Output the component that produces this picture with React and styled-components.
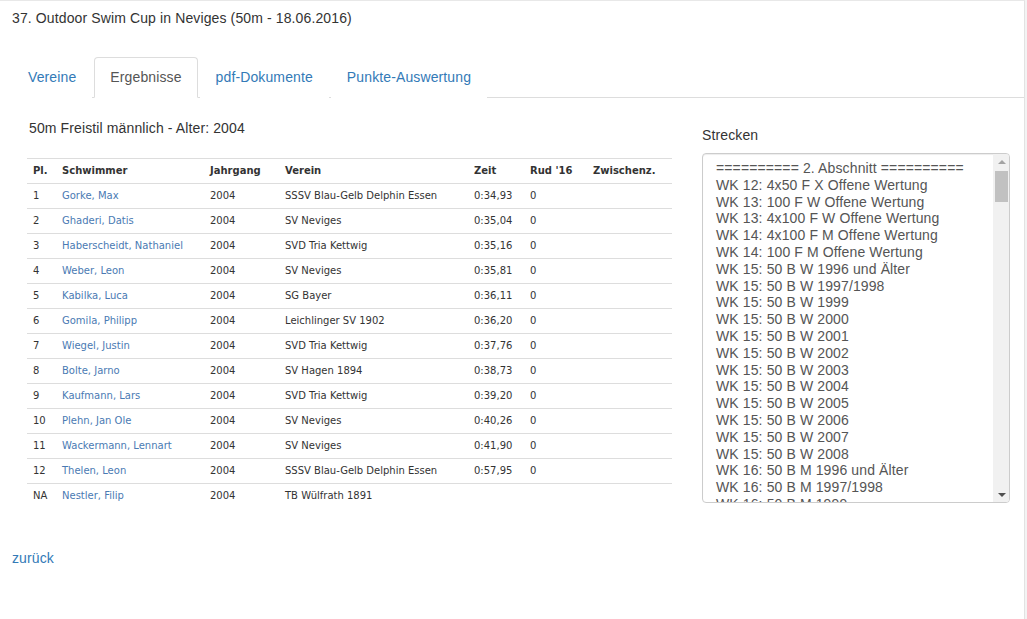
import React from 'react'
import styled, { createGlobalStyle } from 'styled-components'

const GlobalStyle = createGlobalStyle`
  html, body {
    margin: 0;
    padding: 0;
    background: #f3f3f3;
  }
  body {
    font-family: "Liberation Sans", Arial, sans-serif;
    font-size: 14px;
    letter-spacing: 0.12px;
    color: #333;
  }
`

const results = [
  ['1', 'Gorke, Max', '2004', 'SSSV Blau-Gelb Delphin Essen', '0:34,93', '0'],
  ['2', 'Ghaderi, Datis', '2004', 'SV Neviges', '0:35,04', '0'],
  ['3', 'Haberscheidt, Nathaniel', '2004', 'SVD Tria Kettwig', '0:35,16', '0'],
  ['4', 'Weber, Leon', '2004', 'SV Neviges', '0:35,81', '0'],
  ['5', 'Kabilka, Luca', '2004', 'SG Bayer', '0:36,11', '0'],
  ['6', 'Gomila, Philipp', '2004', 'Leichlinger SV 1902', '0:36,20', '0'],
  ['7', 'Wiegel, Justin', '2004', 'SVD Tria Kettwig', '0:37,76', '0'],
  ['8', 'Bolte, Jarno', '2004', 'SV Hagen 1894', '0:38,73', '0'],
  ['9', 'Kaufmann, Lars', '2004', 'SVD Tria Kettwig', '0:39,20', '0'],
  ['10', 'Plehn, Jan Ole', '2004', 'SV Neviges', '0:40,26', '0'],
  ['11', 'Wackermann, Lennart', '2004', 'SV Neviges', '0:41,90', '0'],
  ['12', 'Thelen, Leon', '2004', 'SSSV Blau-Gelb Delphin Essen', '0:57,95', '0'],
  ['NA', 'Nestler, Filip', '2004', 'TB Wülfrath 1891', '', ''],
]

const years = ['1996 und Älter', '1997/1998', '1999', '2000', '2001', '2002', '2003', '2004', '2005', '2006', '2007', '2008']

// only the first lines are visible, the rest sits below the fold of the list
const strecken = [
  '========== 2. Abschnitt ==========',
  'WK 12: 4x50 F X Offene Wertung',
  'WK 13: 100 F W Offene Wertung',
  'WK 13: 4x100 F W Offene Wertung',
  'WK 14: 4x100 F M Offene Wertung',
  'WK 14: 100 F M Offene Wertung',
  ...years.map((y) => `WK 15: 50 B W ${y}`),
  ...years.slice(0, 3).map((y) => `WK 16: 50 B M ${y}`),
]

const tabs = ['Vereine', 'Ergebnisse', 'pdf-Dokumente', 'Punkte-Auswertung']

function App() {
  return (
    <>
      <GlobalStyle />
      <Page>
        <Title>37. Outdoor Swim Cup in Neviges (50m - 18.06.2016)</Title>
        <TabBar>
          {tabs.map((t) => (
            <Tab key={t} $active={t === 'Ergebnisse'}>{t}</Tab>
          ))}
        </TabBar>
        <Row>
          <LeftCol>
            <Heading>50m Freistil männlich - Alter: 2004</Heading>
            <Table>
              <colgroup>
                <col style={{ width: 29 }} />
                <col style={{ width: 148 }} />
                <col style={{ width: 75 }} />
                <col style={{ width: 189 }} />
                <col style={{ width: 56 }} />
                <col style={{ width: 63 }} />
                <col />
              </colgroup>
              <thead>
                <tr>
                  <Th>Pl.</Th>
                  <Th>Schwimmer</Th>
                  <Th>Jahrgang</Th>
                  <Th>Verein</Th>
                  <Th>Zeit</Th>
                  <Th>Rud '16</Th>
                  <Th>Zwischenz.</Th>
                </tr>
              </thead>
              <tbody>
                {results.map(([pl, name, jg, verein, zeit, rud]) => (
                  <tr key={name}>
                    <Td>{pl}</Td>
                    <Td><NameLink href="#">{name}</NameLink></Td>
                    <Td>{jg}</Td>
                    <Td>{verein}</Td>
                    <Td>{zeit}</Td>
                    <Td>{rud}</Td>
                    <Td></Td>
                  </tr>
                ))}
              </tbody>
            </Table>
          </LeftCol>
          <RightCol>
            <Label>Strecken</Label>
            <ListBox>
              <OptionList>
                {strecken.map((s, i) => (
                  <Option key={i}>{s}</Option>
                ))}
              </OptionList>
              <ScrollBar>
                <ScrollButton><Arrow $dir="up" /></ScrollButton>
                <ScrollTrack><Thumb /></ScrollTrack>
                <ScrollButton><Arrow $dir="down" /></ScrollButton>
              </ScrollBar>
            </ListBox>
          </RightCol>
        </Row>
        <BackLink href="#">zurück</BackLink>
      </Page>
    </>
  )
}

const Page = styled.div`
  width: calc(100% - 2px);
  min-height: 100vh;
  box-sizing: border-box;
  background: #fff;
  border-top: 1px solid #e8e8e8;
  border-right: 1px solid #e2e2e2;
  padding: 7px 0 0 12px;
`

const Title = styled.div`
  font-size: 14px;
  line-height: 20px;
  color: #333;
`

const TabBar = styled.div`
  display: flex;
  margin-top: 29px;
  border-bottom: 1px solid #ddd;
`

const Tab = styled.a`
  display: block;
  padding: 10px 15px;
  line-height: 19px;
  margin-right: 2px;
  margin-bottom: -1px;
  border: 1px solid ${(p) => (p.$active ? '#ddd' : 'transparent')};
  border-bottom-color: ${(p) => (p.$active ? '#fff' : 'transparent')};
  border-radius: 4px 4px 0 0;
  background: #fff;
  color: ${(p) => (p.$active ? '#555' : '#337ab7')};
  cursor: pointer;
`

const Row = styled.div`
  display: grid;
  grid-template-columns: 675px 1fr;
`

const LeftCol = styled.div`
  padding: 20px 15px 0;
`

const RightCol = styled.div`
  padding: 27px 14px 0 15px;
`

const Heading = styled.div`
  font-size: 14px;
  line-height: 20px;
  margin-left: 2px;
  margin-bottom: 20px;
`

const Table = styled.table`
  width: 100%;
  table-layout: fixed;
  border-collapse: collapse;
  font-family: "DejaVu Sans", Verdana, sans-serif;
  font-size: 10px;
  letter-spacing: 0;
  color: #333;
`

const Th = styled.th`
  text-align: left;
  font-weight: bold;
  padding: 5px 6px;
  line-height: 14px;
  border-top: 1px solid #ddd;
  white-space: nowrap;
  overflow: hidden;
`

const Td = styled.td`
  padding: 5px 6px;
  line-height: 14px;
  border-top: 1px solid #ddd;
  white-space: nowrap;
  overflow: hidden;
`

const NameLink = styled.a`
  color: #4a7ab3;
  text-decoration: none;
`

const Label = styled.div`
  font-size: 14px;
  line-height: 20px;
  margin-bottom: 8px;
`

const ListBox = styled.div`
  display: flex;
  height: 350px;
  box-sizing: border-box;
  border: 1px solid #ccc;
  border-radius: 4px;
  box-shadow: inset 0 1px 1px rgba(0, 0, 0, 0.075);
  overflow: hidden;
`

const OptionList = styled.div`
  flex: 1;
  min-width: 0;
  padding: 6px 0 0 13px;
  overflow: hidden;
  font-size: 14px;
  color: #555;
`

const Option = styled.div`
  line-height: 16.8px;
  white-space: nowrap;
`

const ScrollBar = styled.div`
  width: 16px;
  display: flex;
  flex-direction: column;
  background: #f1f1f1;
`

const ScrollButton = styled.div`
  height: 15px;
  display: flex;
  align-items: center;
  justify-content: center;
  padding-left: 1px;
`

const Arrow = styled.div`
  width: 0;
  height: 0;
  border-left: 4px solid transparent;
  border-right: 4px solid transparent;
  ${(p) =>
    p.$dir === 'up'
      ? 'border-bottom: 4px solid #a3a3a3; margin-top: 1px;'
      : 'border-top: 4px solid #505050; margin-top: 0;'}
`

const ScrollTrack = styled.div`
  flex: 1;
  padding: 2px 1px 0 2px;
`

const Thumb = styled.div`
  height: 31px;
  background: #c1c1c1;
`

const BackLink = styled.a`
  display: inline-block;
  margin-top: 40px;
  font-size: 14px;
  line-height: 20px;
  color: #337ab7;
  text-decoration: none;
`

export default App
